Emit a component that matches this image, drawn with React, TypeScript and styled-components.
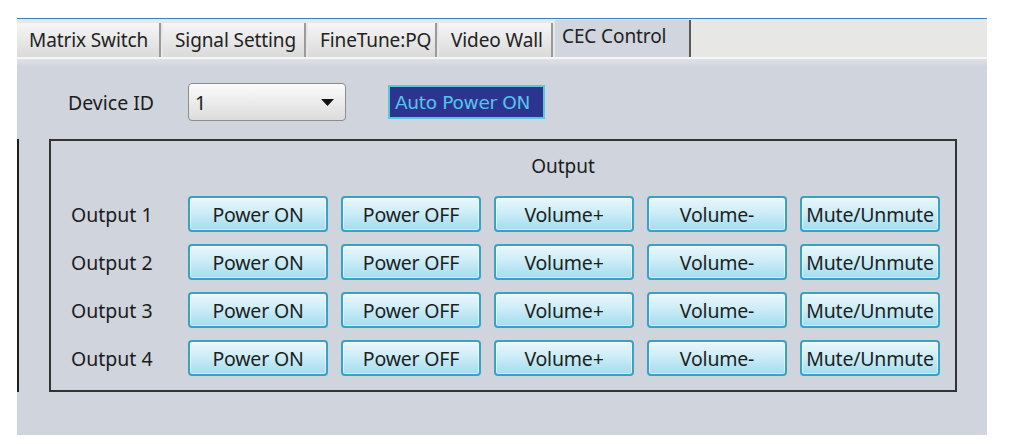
import React from "react";
import styled, { createGlobalStyle } from "styled-components";

const GlobalStyle = createGlobalStyle`
  html, body { margin: 0; padding: 0; background: #ffffff; }
  body { font-family: "Noto Sans", "Open Sans", sans-serif; color: #1c1c1c; }
  * { box-sizing: border-box; }
`;

const Window = styled.div`
  margin: 18px 0 0 17px;
  width: 970px;
  border-top: 1px solid #3b7fc0;
`;

const TabBar = styled.div`
  height: 40px;
  background: #e7e7e5;
  display: flex;
  align-items: flex-end;
  border-bottom: 2px solid #f6f6f6;
`;

const Tab = styled.div<{ $w: number; $active?: boolean }>`
  width: ${(p) => p.$w}px;
  height: ${(p) => (p.$active ? 37 : 34)}px;
  display: flex;
  align-items: ${(p) => (p.$active ? "flex-start" : "center")};
  padding: ${(p) => (p.$active ? "3px 0 0 7px" : "0 0 0 12px")};
  font-size: 19px;
  letter-spacing: -0.1px;
  white-space: nowrap;
  color: #222;
  background: ${(p) =>
    p.$active ? "#d1d5de" : "linear-gradient(#f6f6f6, #dadada)"};
  border-right: 2px solid ${(p) => (p.$active ? "#5a5a5a" : "#9a9a9a")};
  margin-right: ${(p) => (p.$active ? 0 : 2)}px;
`;

const Content = styled.div`
  height: 376px;
  background: linear-gradient(#dfe1e6 0px, #d0d4dd 8px, #d0d4dd 100%);
  display: flex;
  flex-direction: column;
`;

const TopRow = styled.div`
  display: flex;
  align-items: center;
  margin-top: 24px;
  padding-left: 51px;
  height: 38px;
`;

const FieldLabel = styled.div`
  width: 120px;
  font-size: 19.5px;
`;

const Select = styled.div`
  width: 158px;
  height: 38px;
  border: 1.5px solid #8c8c8c;
  border-radius: 4px;
  background: linear-gradient(#fbfbfb, #dcdcdc);
  display: flex;
  align-items: center;
  justify-content: space-between;
  padding: 0 11px 0 6px;
  font-size: 19.5px;
`;

const Arrow = styled.svg`
  width: 13px;
  height: 7px;
`;

const AutoButton = styled.div`
  margin-left: 42px;
  width: 157px;
  height: 34px;
  background: #2b3590;
  border: 2px solid #5cc6dd;
  color: #58c3ea;
  font-family: "DejaVu Sans", Verdana, sans-serif;
  font-size: 18.5px;
  display: flex;
  align-items: center;
  padding-left: 5px;
  white-space: nowrap;
  letter-spacing: -0.3px;
`;

const Body = styled.div`
  display: flex;
  margin-top: 18px;
  height: 253px;
`;

const Rule = styled.div`
  width: 2px;
  background: #1e1e1e;
`;

const GroupBox = styled.div`
  margin-left: 30px;
  width: 908px;
  border: 2px solid #333;
  padding: 13px 0 0 20px;
  display: flex;
  flex-direction: column;
`;

const GroupTitle = styled.div`
  height: 24px;
  line-height: 24px;
  text-align: center;
  font-size: 19px;
  padding-left: 100px;
  margin-bottom: 18px;
`;

const Row = styled.div`
  display: flex;
  align-items: center;
  height: 36px;
  margin-bottom: 12px;
`;

const RowLabel = styled.div`
  width: 117px;
  font-size: 19.5px;
`;

const CtlButton = styled.button`
  width: 140px;
  height: 36px;
  margin-right: 13px;
  border: 2px solid #37a2c4;
  border-radius: 4px;
  background: linear-gradient(#e8f7fc 0%, #cdedf7 45%, #a3dcef 100%);
  box-shadow: inset 0 0 0 1px rgba(255, 255, 255, 0.5);
  font-family: "Noto Sans", "Open Sans", sans-serif;
  font-size: 19.5px;
  color: #1e1e1e;
  padding: 0;
  white-space: nowrap;
  letter-spacing: -0.2px;
`;

const tabs = [
  { label: "Matrix Switch", w: 144 },
  { label: "Signal Setting", w: 143 },
  { label: "FineTune:PQ", w: 129 },
  { label: "Video Wall", w: 114 },
];

const actions = ["Power ON", "Power OFF", "Volume+", "Volume-", "Mute/Unmute"];

export default function App() {
  return (
    <>
      <GlobalStyle />
      <Window>
        <TabBar>
          {tabs.map((t) => (
            <Tab key={t.label} $w={t.w}>
              {t.label}
            </Tab>
          ))}
          <Tab $w={136} $active>
            CEC Control
          </Tab>
        </TabBar>
        <Content>
          <TopRow>
            <FieldLabel>Device ID</FieldLabel>
            <Select>
              <span>1</span>
              <Arrow viewBox="0 0 13 7">
                <polygon points="0,0 13,0 6.5,7" fill="#111" />
              </Arrow>
            </Select>
            <AutoButton>Auto Power ON</AutoButton>
          </TopRow>
          <Body>
            <Rule />
            <GroupBox>
              <GroupTitle>Output</GroupTitle>
              {[1, 2, 3, 4].map((n) => (
                <Row key={n}>
                  <RowLabel>Output {n}</RowLabel>
                  {actions.map((a) => (
                    <CtlButton key={a}>{a}</CtlButton>
                  ))}
                </Row>
              ))}
            </GroupBox>
          </Body>
        </Content>
      </Window>
    </>
  );
}
